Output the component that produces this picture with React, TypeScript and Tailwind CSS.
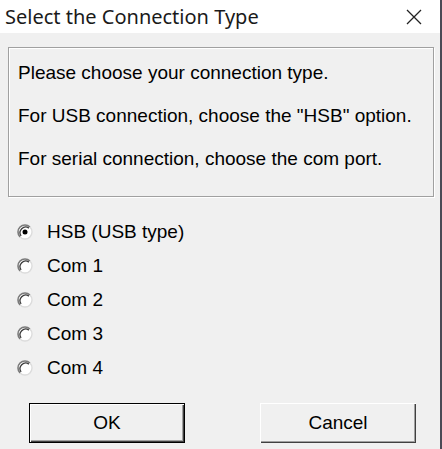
import React from "react";

function Radio({ checked }: { checked?: boolean }) {
  return (
    <svg width="16" height="16" viewBox="0 0 16 16" className="shrink-0">
      <circle cx="8" cy="8" r="7" fill="#ffffff" />
      <path d="M12.95 3.05 A7 7 0 0 0 3.05 12.95" fill="none" stroke="#7a7a7a" strokeWidth="1.6" />
      <path d="M11.9 4.1 A5.6 5.6 0 0 0 4.1 11.9" fill="none" stroke="#3a3a3a" strokeWidth="1.3" />
      <path d="M3.05 12.95 A7 7 0 0 0 12.95 3.05" fill="none" stroke="#dcdcdc" strokeWidth="1.4" />
      {checked && <circle cx="8" cy="8" r="2.5" fill="#000000" />}
    </svg>
  );
}

export default function App() {
  const font = { fontFamily: '"Liberation Sans", Arial, sans-serif' };
  const items = ["HSB (USB type)", "Com 1", "Com 2", "Com 3", "Com 4"];
  return (
    <div className="w-[442px] h-[449px] bg-[#f0f0f0] flex flex-col border-r-2 border-[#4a4a55] overflow-hidden">
      <div className="h-[33px] bg-white flex items-center justify-between pl-[5px] pr-[18px] shrink-0">
        <span className="text-[20px] text-[#1a1a1a] leading-none" style={{ fontFamily: '"Noto Sans", "Open Sans", sans-serif' }}>
          Select the Connection Type
        </span>
        <svg width="16" height="16" viewBox="0 0 16 16">
          <path d="M1 1 L15 15 M15 1 L1 15" stroke="#222" strokeWidth="1.3" fill="none" />
        </svg>
      </div>
      <div className="flex flex-col text-[19px] text-black" style={font}>
        <div className="mt-[14px] ml-[8px] mr-[6px] h-[150px] border border-[#a0a0a0] shadow-[1px_1px_0_#ffffff,inset_1px_1px_0_#ffffff] pl-[9px] pt-[3px]">
          <div className="h-[43px] leading-[43px]">Please choose your connection type.</div>
          <div className="h-[43px] leading-[43px]">For USB connection, choose the "HSB" option.</div>
          <div className="h-[43px] leading-[43px]">For serial connection, choose the com port.</div>
        </div>
        <div className="mt-[18px] ml-[17px] flex flex-col">
          {items.map((t, i) => (
            <div key={t} className="h-[34px] flex items-center gap-[14px]">
              <Radio checked={i === 0} />
              <span>{t}</span>
            </div>
          ))}
        </div>
        <div className="mt-[18px] ml-[29px] flex gap-[75px]">
          <button className="w-[156px] h-[40px] bg-[#f0f0f0] border border-black shadow-[inset_1px_1px_0_#ffffff,inset_-1px_-1px_0_#404040,inset_-2px_-2px_0_#a0a0a0]" style={font}>
            OK
          </button>
          <button className="w-[156px] h-[40px] bg-[#f0f0f0] shadow-[inset_1px_1px_0_#ffffff,inset_-1px_-1px_0_#404040,inset_-2px_-2px_0_#a0a0a0]" style={font}>
            Cancel
          </button>
        </div>
      </div>
    </div>
  );
}
